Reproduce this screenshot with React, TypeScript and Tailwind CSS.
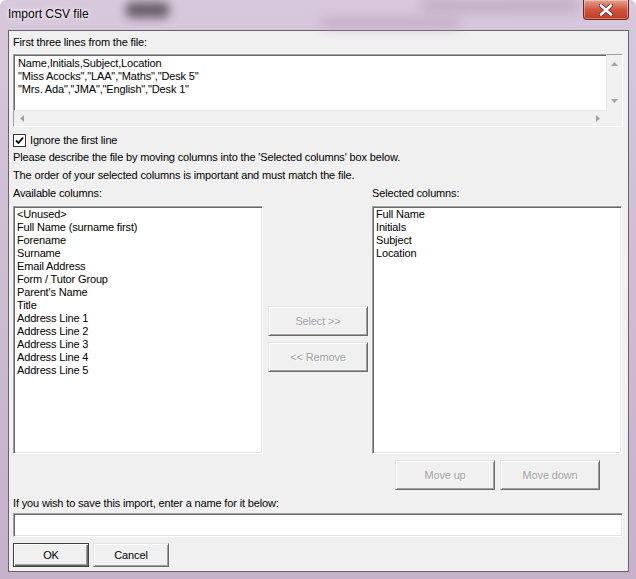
import React from 'react';

const available = [
  '<Unused>',
  'Full Name (surname first)',
  'Forename',
  'Surname',
  'Email Address',
  'Form / Tutor Group',
  "Parent's Name",
  'Title',
  'Address Line 1',
  'Address Line 2',
  'Address Line 3',
  'Address Line 4',
  'Address Line 5',
];

const selected = ['Full Name', 'Initials', 'Subject', 'Location'];

const fileLines = [
  'Name,Initials,Subject,Location',
  '"Miss Acocks","LAA","Maths","Desk 5"',
  '"Mrs. Ada","JMA","English","Desk 1"',
];

const sunken =
  'bg-white border-t border-l border-t-[#a0a0a0] border-l-[#a0a0a0] border-b border-r border-b-white border-r-white shadow-[inset_1px_1px_0_#696969,inset_-1px_-1px_0_#e3e3e3]';

const raised =
  'bg-[#f0f0f0] border-t border-l border-t-[#e3e3e3] border-l-[#e3e3e3] border-b border-r border-b-[#696969] border-r-[#696969] shadow-[inset_1px_1px_0_#ffffff,inset_-1px_-1px_0_#a0a0a0]';

function DisabledButton({ label, className }: { label: string; className: string }) {
  return (
    <div className={`${raised} ${className} flex items-center justify-center text-[#a0a0a0] [text-shadow:1px_1px_0_#ffffff]`}>
      {label}
    </div>
  );
}

function ListBox({ items }: { items: string[] }) {
  return (
    <div className={`${sunken} h-[248px] pt-[1px] pl-[3px]`}>
      {items.map((item) => (
        <div key={item} className="h-[13px] leading-[13px] whitespace-nowrap">
          {item}
        </div>
      ))}
    </div>
  );
}

export default function App() {
  return (
    <div className="relative w-[636px] h-[579px] flex flex-col overflow-hidden bg-gradient-to-b from-[#d8c8dc] via-[#cdbcd2] to-[#c6b1ca] font-['Liberation_Sans',Arial,sans-serif] text-[11px] tracking-[-0.15px] text-black rounded-t-[6px]">
      {/* title bar */}
      <div className="relative h-[30px] shrink-0 flex items-center pl-[8px] pb-[2px]">
        <div className="absolute left-[125px] top-[2px] w-[45px] h-[16px] rounded-full bg-[#3c343c] blur-[5px] opacity-70" />
        <div className="absolute left-[320px] top-[18px] w-[140px] h-[10px] rounded-full bg-[#b39ab6] blur-[6px] opacity-60" />
        <div className="absolute left-[420px] top-[0px] w-[160px] h-[12px] rounded-full bg-[#a890ad] blur-[6px] opacity-50" />
        <span className="relative text-[12px] tracking-normal [text-shadow:0_0_6px_#ffffff,0_0_3px_#ffffff]">Import CSV file</span>
        <div className="absolute left-[583px] top-0 w-[46px] h-[20px] rounded-b-[4px] border border-t-0 border-[#6a2a22] bg-gradient-to-b from-[#e5a08f] via-[#d0553f] to-[#c13a23] flex items-center justify-center shadow-[inset_0_0_0_1px_rgba(255,255,255,0.35)]">
          <svg width="14" height="12" viewBox="0 0 14 12">
            <path d="M2 1.5 L12 10.5 M12 1.5 L2 10.5" stroke="#5a3030" strokeWidth="4.2" strokeLinecap="round" />
            <path d="M2 1.5 L12 10.5 M12 1.5 L2 10.5" stroke="#ffffff" strokeWidth="2.6" strokeLinecap="round" />
          </svg>
        </div>
      </div>

      {/* client area */}
      <div className="ml-[8px] mr-[7px] h-[542px] border border-[#646464] bg-[#f0f0f0] flex flex-col pl-[4px] pr-[5px]">
        <div className="mt-[4px] h-[14px] leading-[14px]">First three lines from the file:</div>

        {/* preview box */}
        <div className={`${sunken} mt-[5px] h-[73px] flex flex-col`}>
          <div className="flex flex-1">
            <div className="flex-1 pt-[2px] pl-[4px]">
              {fileLines.map((l) => (
                <div key={l} className="h-[13px] leading-[13px] whitespace-nowrap">
                  {l}
                </div>
              ))}
            </div>
            <div className="w-[16px] bg-[#f0f0f0] flex flex-col items-center justify-between py-[7px] border-l border-[#e8e8e8]">
              <svg width="7" height="4" viewBox="0 0 7 4"><path d="M0 4 L3.5 0 L7 4 Z" fill="#a0a0a0" /></svg>
              <svg width="7" height="4" viewBox="0 0 7 4"><path d="M0 0 L3.5 4 L7 0 Z" fill="#a0a0a0" /></svg>
            </div>
          </div>
          <div className="flex h-[16px]">
            <div className="flex-1 bg-[#f0f0f0] flex items-center justify-between px-[6px] border-t border-[#e8e8e8]">
              <svg width="4" height="7" viewBox="0 0 4 7"><path d="M4 0 L0 3.5 L4 7 Z" fill="#a0a0a0" /></svg>
              <svg width="4" height="7" viewBox="0 0 4 7"><path d="M0 0 L4 3.5 L0 7 Z" fill="#a0a0a0" /></svg>
            </div>
            <div className="w-[16px] bg-[#f0f0f0]" />
          </div>
        </div>

        {/* checkbox */}
        <div className="mt-[7px] h-[13px] flex items-center">
          <div className="w-[13px] h-[13px] border border-[#333333] bg-white flex items-center justify-center">
            <svg width="9" height="9" viewBox="0 0 9 9">
              <path d="M1 4.5 L3.5 7 L8 1.5" stroke="#000000" strokeWidth="1.8" fill="none" />
            </svg>
          </div>
          <span className="ml-[4px] leading-[13px]">Ignore the first line</span>
        </div>

        <div className="mt-[3px] h-[14px] leading-[14px]">
          Please describe the file by moving columns into the 'Selected columns' box below.
        </div>
        <div className="mt-[4px] h-[14px] leading-[14px]">
          The order of your selected columns is important and must match the file.
        </div>

        {/* columns */}
        <div className="mt-[4px] grid grid-cols-[250px_105px_254px]">
          <div className="h-[14px] leading-[14px]">Available columns:</div>
          <div />
          <div className="h-[14px] leading-[14px] pl-[4px]">Selected columns:</div>

          <div className="mt-[6px]">
            <ListBox items={available} />
          </div>
          <div className="mt-[6px] pl-[5px] pt-[100px] flex flex-col gap-[6px]">
            <DisabledButton label="Select >>" className="w-[100px] h-[30px]" />
            <DisabledButton label="<< Remove" className="w-[100px] h-[30px]" />
          </div>
          <div className="mt-[6px] pl-[4px]">
            <ListBox items={selected} />
          </div>
        </div>

        <div className="mt-[6px] flex gap-[5px] ml-[382px]">
          <DisabledButton label="Move up" className="w-[100px] h-[30px]" />
          <DisabledButton label="Move down" className="w-[100px] h-[30px]" />
        </div>

        <div className="mt-[6px] h-[14px] leading-[14px]">If you wish to save this import, enter a name for it below:</div>
        <div className={`${sunken} mt-[3px] h-[24px]`} />

        <div className="mt-[6px] flex gap-[4px]">
          <div className="w-[76px] h-[24px] border border-[#404040] bg-[#f0f0f0] flex items-center justify-center shadow-[inset_1px_1px_0_#ffffff,inset_-1px_-1px_0_#696969,inset_-2px_-2px_0_#a0a0a0]">
            OK
          </div>
          <div className={`${raised} w-[76px] h-[24px] flex items-center justify-center`}>Cancel</div>
        </div>
      </div>
    </div>
  );
}
